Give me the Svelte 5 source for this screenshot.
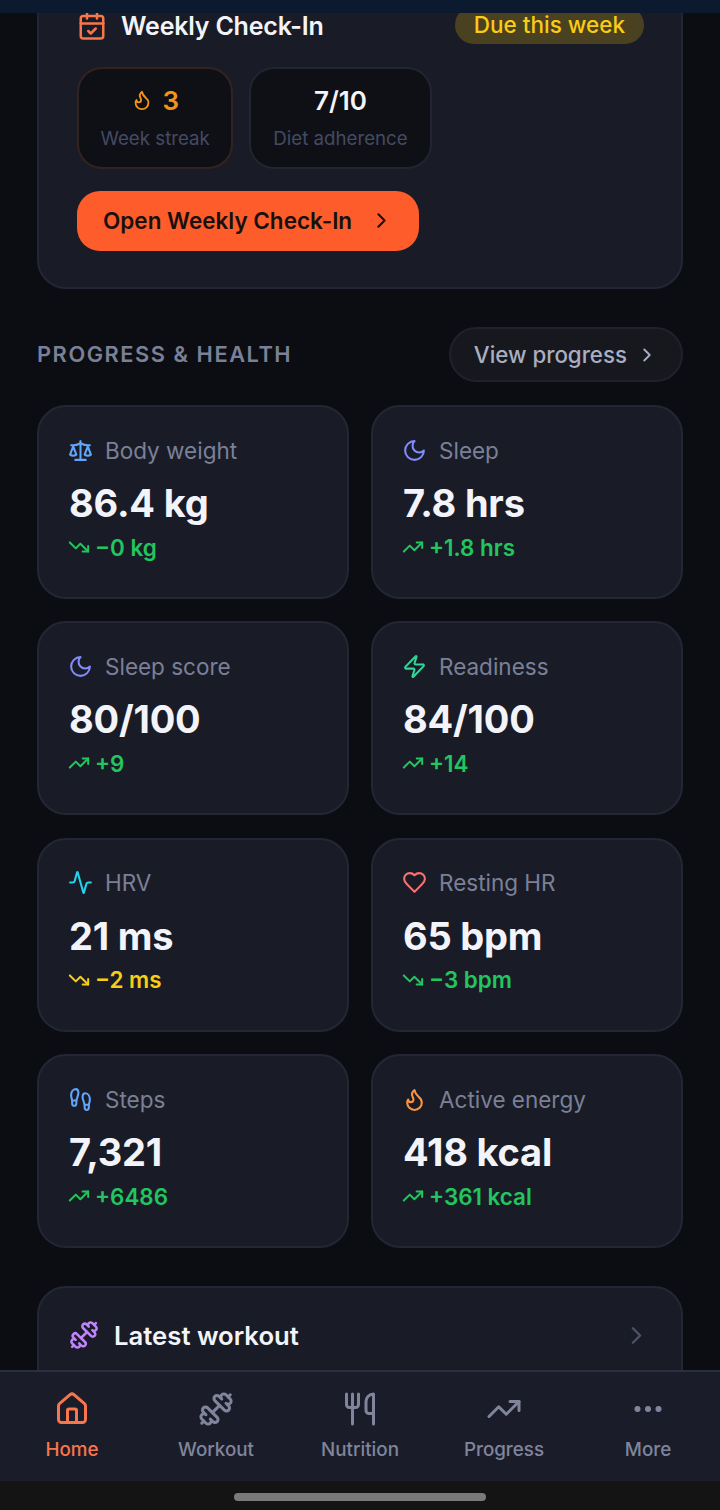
<script>
  const icons = {
    calendar: ["M8 2v4", "M16 2v4", "M5 4h14a2 2 0 0 1 2 2v14a2 2 0 0 1-2 2H5a2 2 0 0 1-2-2V6a2 2 0 0 1 2-2Z", "M3 10h18", "m9 16 2 2 4-4"],
    flame: ["M8.5 14.5A2.5 2.5 0 0 0 11 12c0-1.38-.5-2-1-3-1.072-2.143-.224-4.054 2-6 .5 2.5 2 4.9 4 6.5 2 1.6 3 3.5 3 5.5a7 7 0 1 1-14 0c0-1.153.433-2.294 1-3a2.5 2.5 0 0 0 2.5 2.5z"],
    chevron: ["m9 18 6-6-6-6"],
    scale: ["m16 16 3-8 3 8c-.87.65-1.92 1-3 1s-2.13-.35-3-1Z", "m2 16 3-8 3 8c-.87.65-1.92 1-3 1s-2.13-.35-3-1Z", "M7 21h10", "M12 3v18", "M3 7h2c2 0 5-1 7-2 2 1 5 2 7 2h2"],
    moon: ["M12 3a6 6 0 0 0 9 9 9 9 0 1 1-9-9Z"],
    zap: ["M4 14a1 1 0 0 1-.78-1.63l9.9-10.2a.5.5 0 0 1 .86.46l-1.92 6.02A1 1 0 0 0 13 10h7a1 1 0 0 1 .78 1.63l-9.9 10.2a.5.5 0 0 1-.86-.46l1.92-6.02A1 1 0 0 0 11 14z"],
    activity: ["M22 12h-2.48a2 2 0 0 0-1.93 1.46l-2.35 8.36a.25.25 0 0 1-.48 0L9.24 2.18a.25.25 0 0 0-.48 0l-2.35 8.36A2 2 0 0 1 4.49 12H2"],
    heart: ["M19 14c1.49-1.46 3-3.21 3-5.5A5.5 5.5 0 0 0 16.5 3c-1.76 0-3 .5-4.5 2-1.5-1.5-2.74-2-4.5-2A5.5 5.5 0 0 0 2 8.5c0 2.3 1.5 4.05 3 5.5l7 7Z"],
    footprints: ["M4 16v-2.38C4 11.5 2.97 10.5 3 8c.03-2.72 1.49-6 4.5-6C9.37 2 10 3.8 10 5.5c0 3.11-2 5.66-2 8.68V16a2 2 0 1 1-4 0Z", "M20 20v-2.38c0-2.12 1.03-3.12 1-5.62-.03-2.72-1.49-6-4.5-6C14.63 6 14 7.8 14 9.5c0 3.11 2 5.66 2 8.68V20a2 2 0 1 0 4 0Z", "M16 17h4", "M4 13h4"],
    dumbbell: ["M9.6 14.4 14.4 9.6", "M5.343 21.485a2 2 0 1 0 2.829-2.828l1.767 1.768a2 2 0 1 0 2.829-2.829l-6.364-6.364a2 2 0 1 0-2.829 2.829l1.768 1.767a2 2 0 1 0-2.828 2.829z", "m2.5 21.5 1.4-1.4", "M20.1 3.9l1.4-1.4", "M17.596 12.768a2 2 0 1 0 2.829-2.829l-1.768-1.767a2 2 0 1 0 2.828-2.829l-2.828-2.828a2 2 0 1 0-2.829 2.828l-1.767-1.768a2 2 0 1 0-2.829 2.829z"],
    up: ["M16 7h6v6", "m22 7-8.5 8.5-5-5L2 17"],
    down: ["M16 17h6v-6", "m22 17-8.5-8.5-5 5L2 7"],
    house: ["M15 21v-8a1 1 0 0 0-1-1h-4a1 1 0 0 0-1 1v8", "M3 10a2 2 0 0 1 .709-1.528l7-5.999a2 2 0 0 1 2.582 0l7 5.999A2 2 0 0 1 21 10v9a2 2 0 0 1-2 2H5a2 2 0 0 1-2-2z"],
    utensils: ["M3 2v7c0 1.1.9 2 2 2h4a2 2 0 0 0 2-2V2", "M7 2v20", "M21 15V2a5 5 0 0 0-5 5v6c0 1.1.9 2 2 2h3Zm0 0v7"],
    dots: ["M12 12h.01", "M19 12h.01", "M5 12h.01"]
  };

  const stats = [
    { icon: "scale", tint: "blue", label: "Body weight", value: "86.4 kg", trend: "down", delta: "−0 kg", tone: "good" },
    { icon: "moon", tint: "indigo", label: "Sleep", value: "7.8 hrs", trend: "up", delta: "+1.8 hrs", tone: "good" },
    { icon: "moon", tint: "indigo", label: "Sleep score", value: "80/100", trend: "up", delta: "+9", tone: "good" },
    { icon: "zap", tint: "mint", label: "Readiness", value: "84/100", trend: "up", delta: "+14", tone: "good" },
    { icon: "activity", tint: "cyan", label: "HRV", value: "21 ms", trend: "down", delta: "−2 ms", tone: "warn" },
    { icon: "heart", tint: "red", label: "Resting HR", value: "65 bpm", trend: "down", delta: "−3 bpm", tone: "good" },
    { icon: "footprints", tint: "blue", label: "Steps", value: "7,321", trend: "up", delta: "+6486", tone: "good" },
    { icon: "flame", tint: "amber", label: "Active energy", value: "418 kcal", trend: "up", delta: "+361 kcal", tone: "good" }
  ];

  const tabs = [
    { icon: "house", label: "Home", active: true },
    { icon: "dumbbell", label: "Workout" },
    { icon: "utensils", label: "Nutrition" },
    { icon: "up", label: "Progress" },
    { icon: "dots", label: "More" }
  ];
</script>

{#snippet icon(name, cls)}
  <svg class={cls} viewBox="0 0 24 24" fill="none" stroke="currentColor" stroke-linecap="round" stroke-linejoin="round">
    {#each icons[name] as d}
      <path {d} />
    {/each}
  </svg>
{/snippet}

<div class="screen">
  <div class="statusbar"></div>

  <main>
    <section class="card checkin">
      <div class="checkin-head">
        <div class="checkin-title">
          {@render icon("calendar", "ic-head coral")}
          <h2>Weekly Check-In</h2>
        </div>
        <span class="due">Due this week</span>
      </div>

      <div class="tiles">
        <div class="tile streak">
          <div class="tile-value">
            {@render icon("flame", "ic-flame")}
            <span>3</span>
          </div>
          <div class="tile-label">Week streak</div>
        </div>
        <div class="tile">
          <div class="tile-value">7/10</div>
          <div class="tile-label">Diet adherence</div>
        </div>
      </div>

      <button class="cta">
        Open Weekly Check-In
        {@render icon("chevron", "ic-chev")}
      </button>
    </section>

    <div class="section-head">
      <h3>PROGRESS &amp; HEALTH</h3>
      <button class="view">
        View progress
        {@render icon("chevron", "ic-chev-sm")}
      </button>
    </div>

    <div class="grid">
      {#each stats as s}
        <div class="card stat">
          <div class="stat-label">
            {@render icon(s.icon, "ic-stat " + s.tint)}
            <span>{s.label}</span>
          </div>
          <div class="stat-value">{s.value}</div>
          <div class="stat-delta {s.tone}">
            {@render icon(s.trend, "ic-trend")}
            <span>{s.delta}</span>
          </div>
        </div>
      {/each}
    </div>

    <section class="card latest">
      {@render icon("dumbbell", "ic-head purple")}
      <h2>Latest workout</h2>
      {@render icon("chevron", "ic-latest")}
    </section>
  </main>

  <nav>
    {#each tabs as t}
      <div class="tab" class:active={t.active}>
        {@render icon(t.icon, t.icon === "dots" ? "ic-tab ic-dots" : "ic-tab")}
        <span>{t.label}</span>
      </div>
    {/each}
  </nav>

  <div class="homebar"><div class="indicator"></div></div>
</div>

<style>
  :global(body) {
    background: #0c0d12;
  }

  * {
    box-sizing: border-box;
    margin: 0;
    padding: 0;
  }

  svg {
    display: block;
    flex: none;
  }

  .screen {
    position: relative;
    width: 720px;
    height: 1510px;
    display: flex;
    flex-direction: column;
    overflow: hidden;
    background: #0c0d12;
    font-family: Inter, "Liberation Sans", sans-serif;
    color: #f3f4f9;
  }

  /* sits over the scrolled content */
  .statusbar {
    position: absolute;
    top: 0;
    left: 0;
    right: 0;
    height: 13px;
    z-index: 2;
    background: #0c1a30;
  }

  main {
    flex: 1;
    min-height: 0;
    overflow: hidden;
    padding: 0 37px;
  }

  .card {
    background: #191c27;
    border: 2px solid #232734;
    border-radius: 29px;
  }

  /* top of this card is scrolled out of the page */
  .checkin {
    margin-top: -40px;
    height: 329px;
    padding: 44px 37px 0 38px;
  }

  .checkin-head {
    display: flex;
    justify-content: space-between;
    align-items: center;
    height: 38px;
  }

  .checkin-title {
    display: flex;
    align-items: center;
    gap: 14px;
    margin-top: 2px;
  }

  .checkin-title h2 {
    font-size: 25px;
    font-weight: 600;
    letter-spacing: -0.2px;
  }

  .due {
    width: 189px;
    height: 38px;
    line-height: 38px;
    text-align: center;
    font-size: 22.5px;
    font-weight: 500;
    color: #facc15;
    background: #4a4120;
    border-radius: 19px;
  }

  .tiles {
    display: flex;
    gap: 16px;
    margin-top: 23px;
  }

  .tile {
    height: 102px;
    padding: 0 22px;
    display: flex;
    flex-direction: column;
    align-items: center;
    background: #0f1016;
    border: 2px solid #212532;
    border-radius: 25px;
  }

  .streak {
    padding: 0 21.5px;
    border-color: #33231e;
  }

  .tile-value {
    display: flex;
    align-items: center;
    gap: 9px;
    margin-top: 13px;
    height: 36px;
    font-size: 26px;
    font-weight: 600;
  }

  .streak .tile-value {
    color: #f59315;
  }

  .tile-label {
    margin-top: 9px;
    font-size: 18.7px;
    color: #444a63;
    white-space: nowrap;
  }

  .cta {
    display: flex;
    align-items: center;
    gap: 17px;
    height: 60px;
    width: 342px;
    margin-top: 22px;
    padding: 0 0 2px 26px;
    border: none;
    border-radius: 23px;
    background: #ff5c2b;
    color: #18100c;
    font: 600 22.5px Inter, "Liberation Sans", sans-serif;
  }

  .section-head {
    display: flex;
    justify-content: space-between;
    align-items: center;
    margin-top: 38px;
    height: 55px;
  }

  .section-head h3 {
    margin-bottom: 2px;
    font-size: 21.8px;
    font-weight: 600;
    letter-spacing: 1.55px;
    color: #7b8097;
  }

  .view {
    display: flex;
    align-items: center;
    gap: 9px;
    height: 55px;
    padding: 0 23px;
    background: #17181e;
    border: 2px solid #202229;
    border-radius: 28px;
    color: #a9aec1;
    font: 500 22.3px Inter, "Liberation Sans", sans-serif;
  }

  .grid {
    display: grid;
    grid-template-columns: 312px 312px;
    justify-content: space-between;
    gap: 22.4px 22px;
    margin-top: 23px;
  }

  .stat {
    height: 194px;
    padding: 0 30px;
  }

  .stat-label {
    display: flex;
    align-items: center;
    gap: 12px;
    margin-top: 27px;
    height: 32px;
    font-size: 22.5px;
    color: #7b8097;
  }

  .stat-label svg,
  .stat-delta svg {
    margin-left: -1px;
  }

  .stat-value {
    margin-top: 15px;
    height: 44px;
    line-height: 44px;
    font-size: 38px;
    font-weight: 700;
    letter-spacing: -0.2px;
  }

  .stat-delta {
    display: flex;
    align-items: center;
    gap: 5px;
    margin-top: 7px;
    height: 30px;
    font-size: 22.4px;
    font-weight: 600;
  }

  .good {
    color: #22c55e;
  }

  .warn {
    color: #facc15;
  }

  .latest {
    display: flex;
    align-items: center;
    gap: 15px;
    height: 130px;
    margin-top: 38px;
    padding: 0 30px 32px 30px;
  }

  .latest h2 {
    flex: 1;
    font-size: 25.7px;
    font-weight: 600;
  }

  nav {
    flex: none;
    height: 111px;
    display: grid;
    grid-template-columns: repeat(5, 1fr);
    background: #1a1d29;
    border-top: 2px solid #2a2e3d;
  }

  .tab {
    display: flex;
    flex-direction: column;
    align-items: center;
    padding-top: 19px;
    color: #80859c;
    font-size: 18.8px;
    font-weight: 500;
  }

  .tab span {
    margin-top: 11px;
  }

  .active {
    color: #f8764b;
  }

  .homebar {
    flex: none;
    height: 29px;
    background: #141414;
    display: flex;
    justify-content: center;
    padding-top: 12px;
  }

  .indicator {
    width: 252px;
    height: 8px;
    border-radius: 4px;
    background: #7a7a7a;
  }

  .ic-head {
    width: 30px;
    height: 30px;
    stroke-width: 2;
  }

  .ic-flame {
    width: 22px;
    height: 22px;
    stroke-width: 2;
  }

  .ic-chev {
    width: 25px;
    height: 25px;
    stroke-width: 2;
  }

  .ic-chev-sm {
    width: 22px;
    height: 22px;
    stroke-width: 2;
  }

  .ic-latest {
    width: 29px;
    height: 29px;
    stroke-width: 2;
    color: #4c5166;
  }

  .ic-stat {
    width: 25px;
    height: 25px;
    stroke-width: 2;
  }

  .ic-trend {
    width: 22px;
    height: 22px;
    stroke-width: 2.2;
  }

  .ic-tab {
    width: 36px;
    height: 36px;
    stroke-width: 2;
  }

  .ic-dots {
    stroke-width: 4;
  }

  .coral { color: #f8764b; }
  .purple { color: #c084fc; }
  .blue { color: #60a5fa; }
  .indigo { color: #818cf8; }
  .mint { color: #34d399; }
  .cyan { color: #22d3ee; }
  .red { color: #f87171; }
  .amber { color: #fb923c; }
</style>
